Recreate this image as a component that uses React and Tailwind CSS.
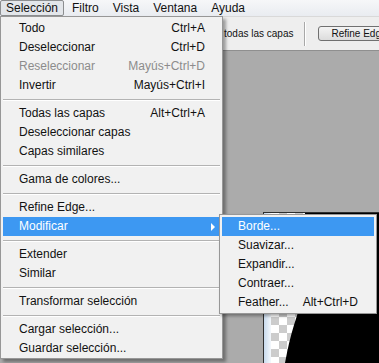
import React from 'react';

const menuItems = [
    { label: 'Todo', key: 'Ctrl+A' },
    { label: 'Deseleccionar', key: 'Ctrl+D' },
    { label: 'Reseleccionar', key: 'Mayús+Ctrl+D', disabled: true },
    { label: 'Invertir', key: 'Mayús+Ctrl+I' },
    { sep: true },
    { label: 'Todas las capas', key: 'Alt+Ctrl+A' },
    { label: 'Deseleccionar capas' },
    { label: 'Capas similares' },
    { sep: true },
    { label: 'Gama de colores...' },
    { sep: true },
    { label: 'Refine Edge...' },
    { label: 'Modificar', sub: true },
    { sep: true },
    { label: 'Extender' },
    { label: 'Similar' },
    { sep: true },
    { label: 'Transformar selección' },
    { sep: true },
    { label: 'Cargar selección...' },
    { label: 'Guardar selección...' },
];

const subItems = [
    { label: 'Borde...', active: true },
    { label: 'Suavizar...' },
    { label: 'Expandir...' },
    { label: 'Contraer...' },
    { label: 'Feather...', key: 'Alt+Ctrl+D' },
];

function Separator() {
    return (
        <div className="h-[9px] flex items-center">
            <div className="w-full h-[2px] border-t border-[#b3b3b3] border-b border-b-white"></div>
        </div>
    );
}

function SubMenu() {
    return (
        <div className="absolute left-[216px] top-[-3px] w-[158px] border border-[#979797] bg-[#f1f1f1] p-[2px] pb-[1px] shadow-[2px_2px_3px_rgba(0,0,0,0.35)] z-20">
            {subItems.map((it) => (
                <div
                    key={it.label}
                    className={`h-[19px] flex items-center justify-between pl-[16px] pr-[16px] ${it.active ? 'bg-[#3d98f2] text-white' : 'text-[#111]'}`}
                >
                    <span>{it.label}</span>
                    {it.key && <span>{it.key}</span>}
                </div>
            ))}
        </div>
    );
}

export default function App() {
    return (
        <div className="relative w-[379px] h-[363px] overflow-hidden flex flex-col bg-[#ababab] font-['Liberation_Sans',Arial,sans-serif] text-[12px] leading-[19px] text-[#111]">
            {/* menu bar */}
            <div className="h-[16px] flex gap-[2px] bg-gradient-to-b from-[#f6f7f9] to-[#e9ecf1] leading-[14px]">
                <div className="px-[5px] border border-[#8c8e90] rounded-[2px] bg-[#e3e6ea]">Selección</div>
                <div className="px-[5px] border border-transparent">Filtro</div>
                <div className="px-[5px] border border-transparent">Vista</div>
                <div className="px-[5px] border border-transparent">Ventana</div>
                <div className="px-[5px] border border-transparent">Ayuda</div>
            </div>

            {/* options bar */}
            <div className="h-[35px] flex items-center overflow-hidden whitespace-nowrap bg-[#eeeeee] border-t border-[#d9d9d9] text-[10px] pl-[224px]">
                <span className="shrink-0">todas las capas</span>
                <div className="shrink-0 ml-[10px] w-[2px] h-[24px] border-l border-[#a8a8a8] border-r border-r-white"></div>
                <div className="shrink-0 ml-[12px] h-[15px] flex items-center pl-[13px] pr-[10px] border border-[#707070] rounded-[3px] bg-gradient-to-b from-[#f4f4f4] to-[#dcdcdc] leading-[13px]">
                    Refine Edge...
                </div>
            </div>

            {/* workspace */}
            <div className="flex-1 flex flex-col border-t border-[#8f8f8f]">
                <div className="mt-[161px] ml-[263px] flex-1 flex border-l border-t border-[#2f2f2f]">
                    <div className="w-[7px] bg-gradient-to-r from-[#c9dbee] to-[#f4f8fc]"></div>
                    <svg className="flex-1" width="108" height="150" viewBox="0 0 108 150">
                        <defs>
                            <pattern id="chk" width="16" height="16" patternUnits="userSpaceOnUse">
                                <rect width="16" height="16" fill="#ffffff" />
                                <rect x="8" width="8" height="8" fill="#cccccc" />
                                <rect y="8" width="8" height="8" fill="#cccccc" />
                            </pattern>
                        </defs>
                        <rect width="108" height="150" fill="url(#chk)" />
                        <path d="M34 0 L29 92 Q26 103 23 112 Q18 128 14 150 L108 150 L108 0 Z" fill="#000" />
                    </svg>
                </div>
            </div>

            {/* dropdown */}
            <div className="absolute left-0 top-[16px] w-[223px] border border-[#979797] bg-[#f1f1f1] px-[2px] pt-[2px] shadow-[3px_3px_3px_rgba(0,0,0,0.35)] z-10">
                {menuItems.map((it, i) =>
                    it.sep ? (
                        <Separator key={i} />
                    ) : (
                        <div
                            key={i}
                            className={`relative h-[19px] flex items-center justify-between pl-[16px] ${it.sub ? 'pr-[5px] bg-[#3d98f2] text-white' : 'pr-[15px]'} ${it.disabled ? 'text-[#8c8c8c]' : ''}`}
                        >
                            <span className="whitespace-nowrap">{it.label}</span>
                            {it.key && <span className="whitespace-nowrap">{it.key}</span>}
                            {it.sub && (
                                <span className="w-0 h-0 border-y-[4px] border-y-transparent border-l-[4px] border-l-white"></span>
                            )}
                            {it.sub && <SubMenu />}
                        </div>
                    )
                )}
            </div>
        </div>
    );
}
